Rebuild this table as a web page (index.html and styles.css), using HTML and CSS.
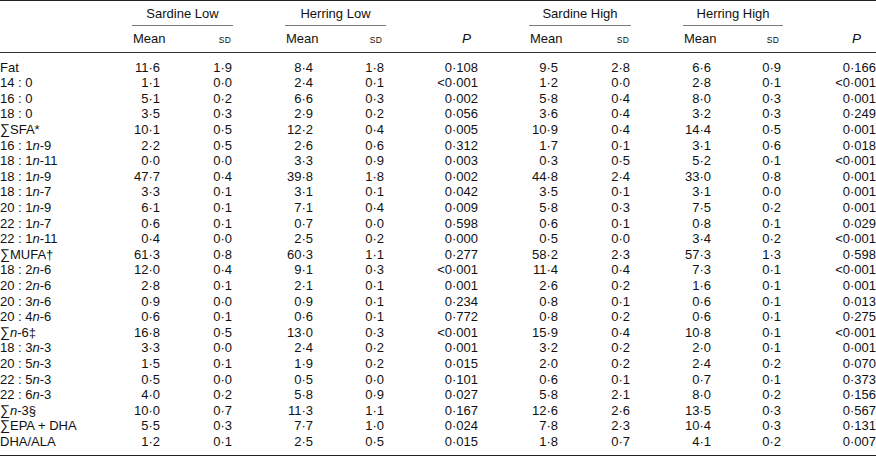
FILE: index.html
```html
<!DOCTYPE html>
<html lang="en">
<head>
<meta charset="utf-8">
<title>Fatty acid composition</title>
<link rel="stylesheet" href="styles.css">
</head>
<body>
<table class="data">
  <colgroup>
    <col class="w-label">
    <col class="w-mean"><col class="w-sd-gap">
    <col class="w-mean"><col class="w-sd">
    <col class="w-p1">
    <col class="w-mean-b"><col class="w-sd-gap">
    <col class="w-mean"><col class="w-sd-b">
    <col class="w-p2">
  </colgroup>
  <thead>
    <tr class="groups">
      <th></th>
      <th colspan="2"><div class="spanner spanner-gap">Sardine Low</div></th>
      <th colspan="2"><div class="spanner">Herring Low</div></th>
      <th></th>
      <th colspan="2"><div class="spanner spanner-gap">Sardine High</div></th>
      <th colspan="2"><div class="spanner">Herring High</div></th>
      <th></th>
    </tr>
    <tr class="cols">
      <th></th>
      <th class="mean">Mean</th><th class="sd gap"><span class="sc">SD</span></th>
      <th class="mean">Mean</th><th class="sd"><span class="sc">SD</span></th>
      <th class="p p1"><i>P</i></th>
      <th class="mean">Mean</th><th class="sd gap"><span class="sc">SD</span></th>
      <th class="mean">Mean</th><th class="sd"><span class="sc">SD</span></th>
      <th class="p p2"><i>P</i></th>
    </tr>
  </thead>
  <tbody>
    <tr><th>Fat</th><td class="mean">11·6</td><td class="sd gap">1·9</td><td class="mean">8·4</td><td class="sd">1·8</td><td class="p p1">0·108</td><td class="mean">9·5</td><td class="sd gap">2·8</td><td class="mean">6·6</td><td class="sd">0·9</td><td class="p p2">0·166</td></tr>
    <tr><th>14 : 0</th><td class="mean">1·1</td><td class="sd gap">0·0</td><td class="mean">2·4</td><td class="sd">0·1</td><td class="p p1">&lt;0·001</td><td class="mean">1·2</td><td class="sd gap">0·0</td><td class="mean">2·8</td><td class="sd">0·1</td><td class="p p2">&lt;0·001</td></tr>
    <tr><th>16 : 0</th><td class="mean">5·1</td><td class="sd gap">0·2</td><td class="mean">6·6</td><td class="sd">0·3</td><td class="p p1">0·002</td><td class="mean">5·8</td><td class="sd gap">0·4</td><td class="mean">8·0</td><td class="sd">0·3</td><td class="p p2">0·001</td></tr>
    <tr><th>18 : 0</th><td class="mean">3·5</td><td class="sd gap">0·3</td><td class="mean">2·9</td><td class="sd">0·2</td><td class="p p1">0·056</td><td class="mean">3·6</td><td class="sd gap">0·4</td><td class="mean">3·2</td><td class="sd">0·3</td><td class="p p2">0·249</td></tr>
    <tr><th><span class="sum">∑</span>SFA*</th><td class="mean">10·1</td><td class="sd gap">0·5</td><td class="mean">12·2</td><td class="sd">0·4</td><td class="p p1">0·005</td><td class="mean">10·9</td><td class="sd gap">0·4</td><td class="mean">14·4</td><td class="sd">0·5</td><td class="p p2">0·001</td></tr>
    <tr><th>16 : 1<i>n</i>-9</th><td class="mean">2·2</td><td class="sd gap">0·5</td><td class="mean">2·6</td><td class="sd">0·6</td><td class="p p1">0·312</td><td class="mean">1·7</td><td class="sd gap">0·1</td><td class="mean">3·1</td><td class="sd">0·6</td><td class="p p2">0·018</td></tr>
    <tr><th>18 : 1<i>n</i>-11</th><td class="mean">0·0</td><td class="sd gap">0·0</td><td class="mean">3·3</td><td class="sd">0·9</td><td class="p p1">0·003</td><td class="mean">0·3</td><td class="sd gap">0·5</td><td class="mean">5·2</td><td class="sd">0·1</td><td class="p p2">&lt;0·001</td></tr>
    <tr><th>18 : 1<i>n</i>-9</th><td class="mean">47·7</td><td class="sd gap">0·4</td><td class="mean">39·8</td><td class="sd">1·8</td><td class="p p1">0·002</td><td class="mean">44·8</td><td class="sd gap">2·4</td><td class="mean">33·0</td><td class="sd">0·8</td><td class="p p2">0·001</td></tr>
    <tr><th>18 : 1<i>n</i>-7</th><td class="mean">3·3</td><td class="sd gap">0·1</td><td class="mean">3·1</td><td class="sd">0·1</td><td class="p p1">0·042</td><td class="mean">3·5</td><td class="sd gap">0·1</td><td class="mean">3·1</td><td class="sd">0·0</td><td class="p p2">0·001</td></tr>
    <tr><th>20 : 1<i>n</i>-9</th><td class="mean">6·1</td><td class="sd gap">0·1</td><td class="mean">7·1</td><td class="sd">0·4</td><td class="p p1">0·009</td><td class="mean">5·8</td><td class="sd gap">0·3</td><td class="mean">7·5</td><td class="sd">0·2</td><td class="p p2">0·001</td></tr>
    <tr><th>22 : 1<i>n</i>-7</th><td class="mean">0·6</td><td class="sd gap">0·1</td><td class="mean">0·7</td><td class="sd">0·0</td><td class="p p1">0·598</td><td class="mean">0·6</td><td class="sd gap">0·1</td><td class="mean">0·8</td><td class="sd">0·1</td><td class="p p2">0·029</td></tr>
    <tr><th>22 : 1<i>n</i>-11</th><td class="mean">0·4</td><td class="sd gap">0·0</td><td class="mean">2·5</td><td class="sd">0·2</td><td class="p p1">0·000</td><td class="mean">0·5</td><td class="sd gap">0·0</td><td class="mean">3·4</td><td class="sd">0·2</td><td class="p p2">&lt;0·001</td></tr>
    <tr><th><span class="sum">∑</span>MUFA†</th><td class="mean">61·3</td><td class="sd gap">0·8</td><td class="mean">60·3</td><td class="sd">1·1</td><td class="p p1">0·277</td><td class="mean">58·2</td><td class="sd gap">2·3</td><td class="mean">57·3</td><td class="sd">1·3</td><td class="p p2">0·598</td></tr>
    <tr><th>18 : 2<i>n</i>-6</th><td class="mean">12·0</td><td class="sd gap">0·4</td><td class="mean">9·1</td><td class="sd">0·3</td><td class="p p1">&lt;0·001</td><td class="mean">11·4</td><td class="sd gap">0·4</td><td class="mean">7·3</td><td class="sd">0·1</td><td class="p p2">&lt;0·001</td></tr>
    <tr><th>20 : 2<i>n</i>-6</th><td class="mean">2·8</td><td class="sd gap">0·1</td><td class="mean">2·1</td><td class="sd">0·1</td><td class="p p1">0·001</td><td class="mean">2·6</td><td class="sd gap">0·2</td><td class="mean">1·6</td><td class="sd">0·1</td><td class="p p2">0·001</td></tr>
    <tr><th>20 : 3<i>n</i>-6</th><td class="mean">0·9</td><td class="sd gap">0·0</td><td class="mean">0·9</td><td class="sd">0·1</td><td class="p p1">0·234</td><td class="mean">0·8</td><td class="sd gap">0·1</td><td class="mean">0·6</td><td class="sd">0·1</td><td class="p p2">0·013</td></tr>
    <tr><th>20 : 4<i>n</i>-6</th><td class="mean">0·6</td><td class="sd gap">0·1</td><td class="mean">0·6</td><td class="sd">0·1</td><td class="p p1">0·772</td><td class="mean">0·8</td><td class="sd gap">0·2</td><td class="mean">0·6</td><td class="sd">0·1</td><td class="p p2">0·275</td></tr>
    <tr><th><span class="sum">∑</span><i>n</i>-6‡</th><td class="mean">16·8</td><td class="sd gap">0·5</td><td class="mean">13·0</td><td class="sd">0·3</td><td class="p p1">&lt;0·001</td><td class="mean">15·9</td><td class="sd gap">0·4</td><td class="mean">10·8</td><td class="sd">0·1</td><td class="p p2">&lt;0·001</td></tr>
    <tr><th>18 : 3<i>n</i>-3</th><td class="mean">3·3</td><td class="sd gap">0·0</td><td class="mean">2·4</td><td class="sd">0·2</td><td class="p p1">0·001</td><td class="mean">3·2</td><td class="sd gap">0·2</td><td class="mean">2·0</td><td class="sd">0·1</td><td class="p p2">0·001</td></tr>
    <tr><th>20 : 5<i>n</i>-3</th><td class="mean">1·5</td><td class="sd gap">0·1</td><td class="mean">1·9</td><td class="sd">0·2</td><td class="p p1">0·015</td><td class="mean">2·0</td><td class="sd gap">0·2</td><td class="mean">2·4</td><td class="sd">0·2</td><td class="p p2">0·070</td></tr>
    <tr><th>22 : 5<i>n</i>-3</th><td class="mean">0·5</td><td class="sd gap">0·0</td><td class="mean">0·5</td><td class="sd">0·0</td><td class="p p1">0·101</td><td class="mean">0·6</td><td class="sd gap">0·1</td><td class="mean">0·7</td><td class="sd">0·1</td><td class="p p2">0·373</td></tr>
    <tr><th>22 : 6<i>n</i>-3</th><td class="mean">4·0</td><td class="sd gap">0·2</td><td class="mean">5·8</td><td class="sd">0·9</td><td class="p p1">0·027</td><td class="mean">5·8</td><td class="sd gap">2·1</td><td class="mean">8·0</td><td class="sd">0·2</td><td class="p p2">0·156</td></tr>
    <tr><th><span class="sum">∑</span><i>n</i>-3§</th><td class="mean">10·0</td><td class="sd gap">0·7</td><td class="mean">11·3</td><td class="sd">1·1</td><td class="p p1">0·167</td><td class="mean">12·6</td><td class="sd gap">2·6</td><td class="mean">13·5</td><td class="sd">0·3</td><td class="p p2">0·567</td></tr>
    <tr><th><span class="sum">∑</span>EPA + DHA</th><td class="mean">5·5</td><td class="sd gap">0·3</td><td class="mean">7·7</td><td class="sd">1·0</td><td class="p p1">0·024</td><td class="mean">7·8</td><td class="sd gap">2·3</td><td class="mean">10·4</td><td class="sd">0·3</td><td class="p p2">0·131</td></tr>
    <tr><th>DHA/ALA</th><td class="mean">1·2</td><td class="sd gap">0·1</td><td class="mean">2·5</td><td class="sd">0·5</td><td class="p p1">0·015</td><td class="mean">1·8</td><td class="sd gap">0·7</td><td class="mean">4·1</td><td class="sd">0·2</td><td class="p p2">0·007</td></tr>
  </tbody>
</table>
</body>
</html>
```

FILE: styles.css
```css
html, body {
  margin: 0;
  padding: 0;
  background: #ffffff;
}

body {
  font-family: "Liberation Sans", Arial, sans-serif;
  font-size: 13px;
  color: #111111;
}

.data {
  width: 876px;
  table-layout: fixed;
  border-collapse: separate;
  border-spacing: 0;
  border-top: 1px solid #222222;
}

.w-label { width: 132px; }
.w-mean { width: 50px; }
.w-mean-b { width: 51px; }
.w-sd { width: 51px; }
.w-sd-b { width: 50px; }
.w-sd-gap { width: 103px; }
.w-p1 { width: 143px; }
.w-p2 { width: 93px; }

.data th,
.data td {
  padding: 0;
  font-weight: normal;
  white-space: nowrap;
}

/* header: group spanners */
.groups th {
  vertical-align: bottom;
}

.spanner {
  padding: 5px 0 3px;
  line-height: 16px;
  text-align: center;
  border-bottom: 1px solid #7a7a7a;
}

.spanner-gap {
  margin-right: 52px;
}

/* header: column names */
.cols th {
  line-height: 16px;
  padding-top: 4.5px;
  padding-bottom: 4.5px;
  border-bottom: 1px solid #333333;
}

.cols th.mean {
  text-align: left;
  padding-left: 1px;
}

.cols th.sd { text-align: right; padding-right: 4px; }
.cols th.sd.gap { padding-right: 54px; }
.cols th.p1 { text-align: right; padding-right: 58px; }
.cols th.p2 { text-align: right; padding-right: 15px; }

.sc {
  font-size: 8.5px;
  letter-spacing: 0.2px;
}

.cols i {
  font-size: 13.5px;
}

/* body */
tbody th,
tbody td {
  line-height: 15.6px;
}

tbody th {
  text-align: left;
  padding-left: 1px;
}

tbody td {
  text-align: right;
}

tbody td.mean { padding-right: 22px; }
tbody td.sd { padding-right: 2px; }
tbody td.sd.gap { padding-right: 53px; }
tbody td.p1 { padding-right: 51px; }
tbody td.p2 { padding-right: 0; }

tbody tr:first-child > * {
  padding-top: 6.7px;
}

tbody tr:last-child > * {
  padding-bottom: 5px;
  border-bottom: 1px solid #222222;
}

.sum {
  font-size: 14px;
}
```
